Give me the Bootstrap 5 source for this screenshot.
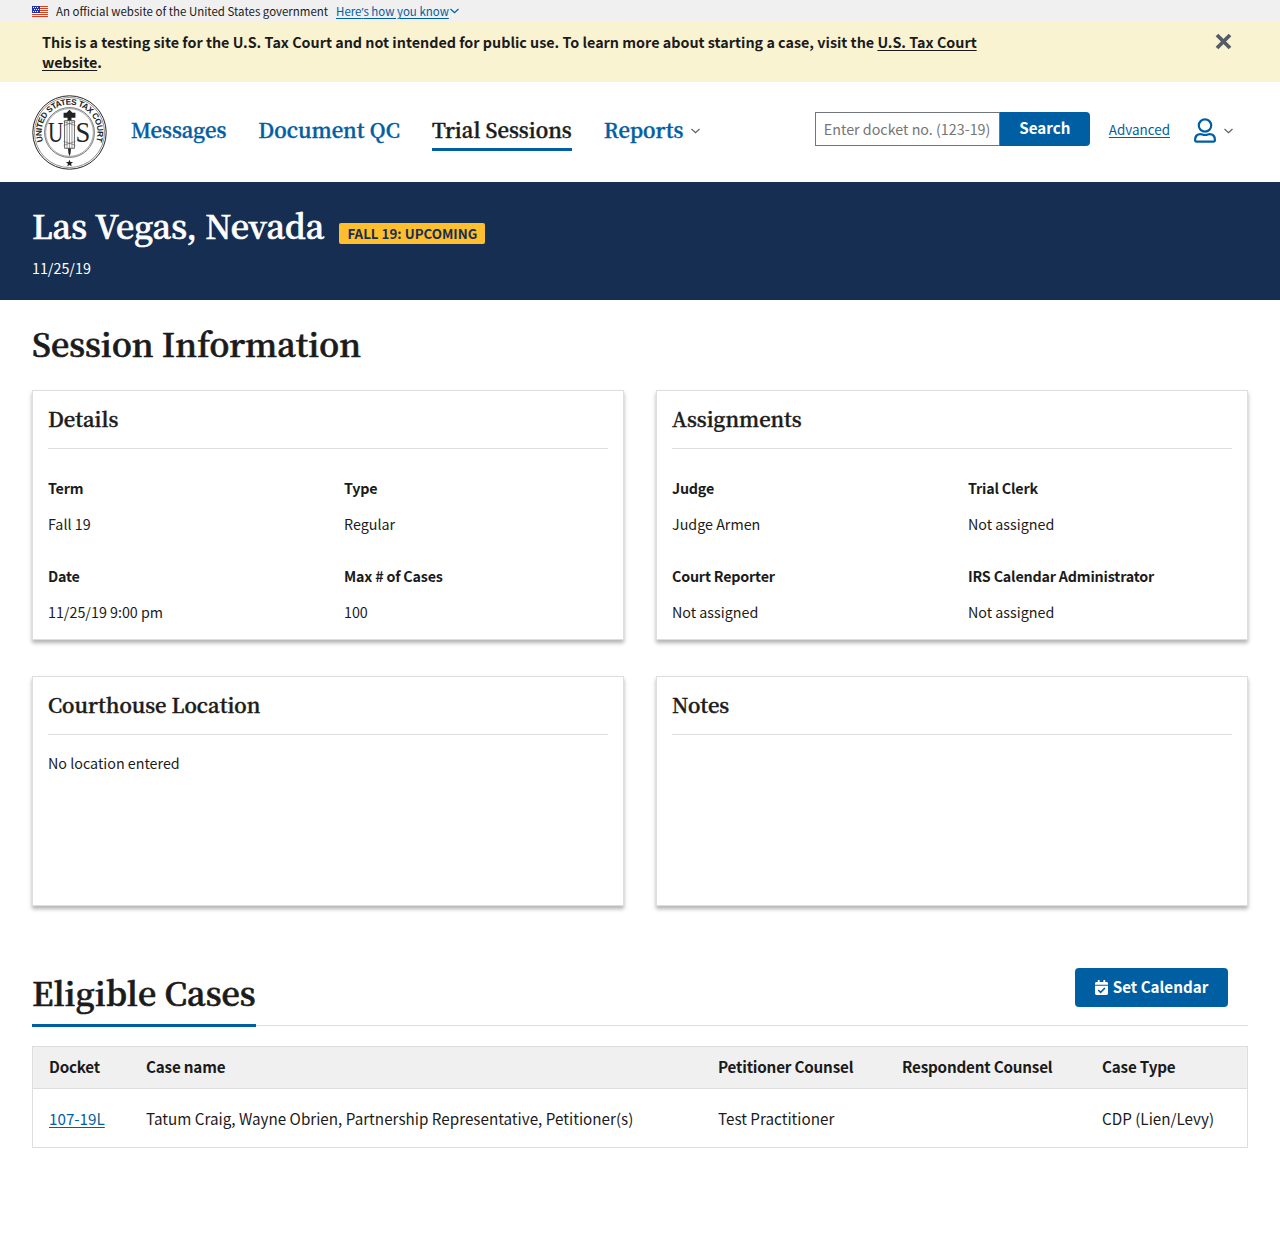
<!DOCTYPE html>
<html lang="en">
<head>
<meta charset="utf-8">
<meta name="viewport" content="width=device-width, initial-scale=1">
<title>Trial Session | U.S. Tax Court</title>
<link href="https://cdn.jsdelivr.net/npm/bootstrap@5.3.0/dist/css/bootstrap.min.css" rel="stylesheet">
<style>
:root{--blue:#005ea2;--ink:#1b1b1b;--navy:#162e51;--line:#dcdee0}
body{font-family:"Noto Sans CJK SC",sans-serif;color:var(--ink);font-size:14.3px;line-height:22px;background:#fff}
a{color:var(--blue);text-underline-offset:2px;text-decoration-thickness:1px}
.serif{font-family:"Noto Serif CJK SC","Liberation Serif",serif;font-weight:600;-webkit-text-stroke:.45px currentColor}
.page-title.serif{-webkit-text-stroke-width:.7px}
.apos{font-family:"Open Sans",sans-serif;line-height:0}
.gov-bar{height:22px;font-size:11.47px;line-height:22px;background:#f0f0f0}
.gov-chevron{margin-left:1px}
.test-banner{height:60px;background:#faf3d1;padding:10px 48px 0 42px;font-weight:700;font-size:14.33px;line-height:20px}
.test-banner a{color:var(--ink)}
.test-banner svg{margin-top:1px}
.test-msg{width:960px}
.site-head{height:100px}
.main-nav{gap:32px;font-size:20.34px;line-height:28px;margin-left:24px;padding-top:2px}
.main-nav a{text-decoration:none;border-bottom:3px solid transparent;padding-bottom:4px}
.main-nav a.current{color:var(--ink);border-color:var(--blue)}
.nav-chevron{margin-left:8px;margin-bottom:3px}
.find-form{margin-bottom:6px}
.docket-field{width:185px;height:34px;border:1px solid #71767a;border-radius:0;padding:0 8px 1px;font-size:14.3px;color:var(--ink)}
.docket-field::placeholder{color:#757575}
.btn-court{--bs-btn-color:#fff;--bs-btn-bg:var(--blue);--bs-btn-hover-bg:#1a4480;--bs-btn-hover-color:#fff;--bs-btn-border-width:0;--bs-btn-font-weight:700;--bs-btn-font-size:15.2px;--bs-btn-line-height:20px;--bs-btn-border-radius:4px}
.btn-find{width:90px;height:34px;border-radius:0 4px 4px 0;padding:0 0 4px}
.adv-link{font-size:13.42px;margin:0 23px 7px 19px}
.user-menu{margin:0 15px 3px 0}
.user-menu svg+svg{margin-left:7px}
.hero{height:118px;background:var(--navy);color:#fff;padding-top:21px}
.page-title{font-size:32.43px;line-height:44px}
.tag-term{background:#ffbe2e;color:var(--navy);font-size:13.34px;line-height:21px;height:21px;border-radius:2px;padding:0 8px;font-weight:700;margin:16px 0 0 15px}
.hero-date{margin-top:10px}
.info-title{margin:21px 0 25px}
.card-grid{--bs-gutter-x:32px;--bs-gutter-y:0}
.info-card{border:1px solid var(--line);border-radius:0;box-shadow:0 3px 4px rgba(0,0,0,.3);padding:14px 15px}
.info-card h3{font-size:20.26px;line-height:28px;margin:0;padding-bottom:15px;border-bottom:1px solid var(--line)}
.card-tall{height:250px}
.card-low{height:230px}
.fields{--bs-gutter-x:32px;padding-top:28px;row-gap:30px}
.field-name{font-weight:700;letter-spacing:-.19px;margin-bottom:14px}
.no-place{margin:17px 0 0}
.tabline{border-bottom:1px solid var(--line);margin-top:62px;height:58px}
.tab-title{border-bottom:3px solid var(--blue);margin:0 0 -1px;height:59px;padding-top:2px}
.btn-cal{width:153px;height:39px;margin-right:20px;padding:0}
.btn-cal span{margin:-3px 0 0 1px}
.cases{border:1px solid var(--line);font-size:15.23px;margin-top:20px;table-layout:fixed}
.cases>:not(caption)>*>*{border:0;padding:0 15px 0 16.5px;vertical-align:middle;color:var(--ink);background:transparent}
.cases>:not(caption)>*>:first-child{padding-left:16px}
.cases th{letter-spacing:-.2px}
.cases>thead>tr>th{padding-bottom:3px}
.cases thead tr{height:42px;background:#f0f0f0;border-bottom:1px solid var(--line)}
.cases tbody tr{height:59px}
</style>
</head>
<body>
<div class="gov-bar px-4"><div class="d-flex align-items-center ps-2">
<svg width="16" height="11" viewBox="0 0 16 11" class="me-2"><path fill="#fff" d="M0 0h16v11H0z"/><path stroke="#db3e1f" d="M0 .5h16M0 2.5h16M0 4.5h16M0 6.5h16M0 8.5h16M0 10.5h16"/><path fill="#1e33b1" d="M0 0h8v7H0z"/><path stroke="#fff" stroke-dasharray="1 1" d="M1 1.5h6M2 3.5h5M1 5.5h6"/></svg>
<span class="me-2">An official website of the United States government</span>
<a href="#">Here<span class="apos">’</span>s how you know</a>
<svg width="9" height="6" viewBox="0 0 9 6" fill="none" stroke="#005ea2" stroke-width="1.200" class="gov-chevron"><path d="M.5 1 4.500 4.700 8.500 1"/></svg></div></div>
<div class="test-banner d-flex justify-content-between">
<div class="test-msg">This is a testing site for the U.S. Tax Court and not intended for public use. To learn more about starting a case, visit the <a href="#">U.S. Tax Court website</a>.</div>
<svg width="17" height="17" viewBox="0 0 17 17" stroke="#565c65" stroke-width="3.800"><path d="m2 2 13 13M15 2 2 15"/></svg>
</div>
<header class="site-head d-flex align-items-center px-4"><div class="d-flex align-items-center w-100 px-2">
<svg width="75" height="76" viewBox="-38 -38.500 76 76" fill="none" stroke="#222">
<circle r="37.200" stroke-width="1"/><circle r="35.500" stroke-width=".5"/><circle r="25.300" stroke-width=".6"/><circle r="24.200" stroke-width=".4"/>
<defs><path id="ring" d="M-26.500 10A28.300 28.300 0 1 1 26.500 10"/></defs>
<text font-family="Liberation Sans" font-weight="700" font-size="8.400" fill="#222" stroke="none"><textPath href="#ring" startOffset="50%" text-anchor="middle" textLength="107">UNITED STATES TAX COURT</textPath></text>
<g fill="#222" stroke="none"><g font-family="Liberation Serif" font-size="29" text-anchor="middle"><text x="-14" y="10" textLength="15.500" lengthAdjust="spacingAndGlyphs">U</text><text x="13.500" y="10" textLength="15" lengthAdjust="spacingAndGlyphs">S</text></g>
<path d="m0 27.500 1 2.300 2.600.2-2 1.700.6 2.500L0 32.900l-2.200 1.300.6-2.500-2-1.700 2.600-.2z"/><path d="M-6-20h3l3-3 3 3h3v5H2v3h-4v-3h-4zM-1.500 16h3l-.4 5L0 24l-1.100-3z"/></g>
<path fill="#fff" stroke-width=".7" d="M-5-12H5v28H-5z"/><path stroke-width=".6" stroke="#555" d="M-2.500-12v28M0-12v28M2.500-12v28M-6-11 6-7M6-11-6-7M-6 9 6 13M6 9-6 13"/>
</svg>
<nav class="main-nav serif d-flex align-items-center">
<a href="#">Messages</a><a href="#">Document QC</a><a href="#" class="current">Trial Sessions</a><a href="#">Reports</a>
</nav>
<svg width="9" height="6" viewBox="0 0 9 6" class="nav-chevron" fill="none" stroke="#565c65" stroke-width="1.100"><path d="M.5 1 4.500 4.700 8.500 1"/></svg>
<form class="find-form d-flex ms-auto"><input class="docket-field" placeholder="Enter docket no. (123-19)" aria-label="Docket number"><button class="btn btn-court btn-find" type="button">Search</button></form>
<a href="#" class="adv-link">Advanced</a>
<div class="user-menu d-flex align-items-center">
<svg width="24" height="26" viewBox="0 0 24 26" fill="none" stroke="#005ea2" stroke-width="2.200"><circle cx="12" cy="7.500" r="6.200"/><path d="M7.500 16.200C3.500 16.200 2.100 19 2.100 22c0 1.200.5 1.700 1.500 1.700h16.800c1 0 1.500-.5 1.500-1.700 0-3-1.400-5.800-5.400-5.800-1.500 0-2 .8-4.500.8s-3-.8-4.500-.8z"/></svg>
<svg width="9" height="6" viewBox="0 0 9 6" fill="none" stroke="#565c65" stroke-width="1.100"><path d="M.5 1 4.500 4.700 8.500 1"/></svg>
</div>
</div></header>
<section class="hero px-4"><div class="px-2"><div class="d-flex align-items-center"><h1 class="page-title serif m-0">Las Vegas, Nevada</h1><span class="tag-term">FALL 19: UPCOMING</span></div><div class="hero-date">11/25/19</div></div></section>
<main class="px-4"><div class="px-2">
<h2 class="page-title serif info-title">Session Information</h2>
<div class="row card-grid">
<div class="col-6"><section class="info-card card-tall"><h3 class="serif">Details</h3>
<div class="row fields"><div class="col-6"><div class="field-name">Term</div>Fall 19</div><div class="col-6"><div class="field-name">Type</div>Regular</div><div class="col-6"><div class="field-name">Date</div>11/25/19 9:00 pm</div><div class="col-6"><div class="field-name">Max # of Cases</div>100</div></div></section></div>
<div class="col-6"><section class="info-card card-tall"><h3 class="serif">Assignments</h3>
<div class="row fields"><div class="col-6"><div class="field-name">Judge</div>Judge Armen</div><div class="col-6"><div class="field-name">Trial Clerk</div>Not assigned</div><div class="col-6"><div class="field-name">Court Reporter</div>Not assigned</div><div class="col-6"><div class="field-name">IRS Calendar Administrator</div>Not assigned</div></div></section></div>
</div>
<div class="row card-grid pt-4 mt-1">
<div class="col-6 mt-2"><section class="info-card card-low"><h3 class="serif">Courthouse Location</h3><p class="no-place">No location entered</p></section></div>
<div class="col-6 mt-2"><section class="info-card card-low"><h3 class="serif">Notes</h3></section></div>
</div>
<div class="tabline d-flex justify-content-between align-items-start"><h2 class="page-title serif tab-title">Eligible Cases</h2>
<button class="btn btn-court btn-cal d-inline-flex align-items-center justify-content-center" type="button"><svg width="13" height="15" viewBox="0 0 14 16" class="me-1"><path fill="#fff" d="M3 0h2v2h4V0h2v2h1.500c.8 0 1.500.700 1.500 1.500V5H0V3.500C0 2.700.7 2 1.500 2H3zM0 6h14v8.500c0 .8-.7 1.500-1.500 1.500h-11C.7 16 0 15.300 0 14.500z"/><path fill="none" stroke="#005ea2" stroke-width="1.700" d="m3.500 10.700 2.500 2.500 4.700-4.700"/></svg><span>Set Calendar</span></button></div>
<table class="table cases mb-0"><colgroup><col style="width:97px"><col style="width:572px"><col style="width:184px"><col style="width:200px"><col></colgroup>
<thead><tr><th>Docket</th><th>Case name</th><th>Petitioner Counsel</th><th>Respondent Counsel</th><th>Case Type</th></tr></thead>
<tbody><tr><td><a href="#">107-19L</a></td><td>Tatum Craig, Wayne Obrien, Partnership Representative, Petitioner(s)</td><td>Test Practitioner</td><td></td><td>CDP (Lien/Levy)</td></tr></tbody></table>
</div></main>
<script src="https://cdn.jsdelivr.net/npm/bootstrap@5.3.0/dist/js/bootstrap.bundle.min.js"></script>
</body>
</html>
